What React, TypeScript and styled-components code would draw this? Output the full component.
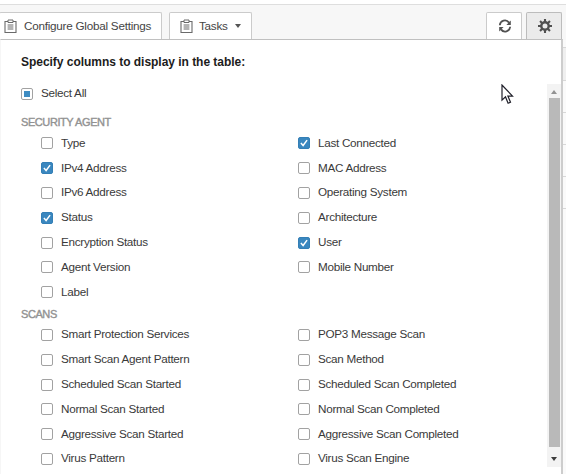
import React from "react";
import styled, { createGlobalStyle } from "styled-components";

const GlobalStyle = createGlobalStyle`
  * { box-sizing: border-box; }
  html, body { margin: 0; padding: 0; overflow: hidden; background: #fff; }
  body { font-family: "Liberation Sans", Arial, sans-serif; font-size: 11.7px; color: #3a3a3a; }
`;

const Screen = styled.main`
  position: relative;
  width: 566px;
  height: 474px;
  overflow: hidden;
  display: flex;
  flex-direction: column;
`;

const Toolbar = styled.header`
  flex: none;
  height: 36px;
  margin-top: 4px;
  padding-right: 4px;
  display: flex;
  align-items: flex-end;
  background: #f7f7f7;
  border-top: 1px solid #dedede;
`;

const Spacer = styled.div`
  flex: 1;
`;

const Button = styled.button<{ $width: number; $gap?: number; $pad?: number; $active?: boolean }>`
  flex: none;
  display: flex;
  align-items: center;
  justify-content: ${(p) => (p.$pad === undefined ? "center" : "flex-start")};
  width: ${(p) => p.$width}px;
  height: 28px;
  margin: 0 0 0 ${(p) => p.$gap ?? 0}px;
  padding: 0 0 0 ${(p) => p.$pad ?? 1}px;
  background: ${(p) => (p.$active ? "#ebebeb" : "#fff")};
  border: 1px solid ${(p) => (p.$active ? "#bcbcbc" : "#cbcbcb")};
  border-bottom-color: #b9b9b9;
  border-radius: 2px 2px 0 0;
  color: #454545;
  font: inherit;
`;

const ButtonText = styled.span<{ $gap?: number }>`
  margin: 0 0 2px ${(p) => p.$gap ?? 7}px;
  letter-spacing: -0.24px;
  white-space: nowrap;
`;

const Caret = styled.i`
  margin: 0 0 0 7px;
  border: 3px solid transparent;
  border-top: 4px solid #555;
  border-bottom: 0;
`;

const Body = styled.div`
  flex: 1;
  min-height: 0;
  display: flex;
`;

const Panel = styled.section`
  width: 563px;
  display: flex;
  flex-direction: column;
  border-top: 1px solid #c0c0c0;
  border-right: 2px solid #cdcdcd;
  border-left: 1px solid #f6f6f6;
  margin-top: -1px;
  background: #fff;
`;

const Title = styled.h1`
  margin: 0;
  padding: 14px 0 0 20px;
  height: 44px;
  font-size: 12px;
  line-height: 16px;
  font-weight: bold;
  color: #1c1c1c;
  letter-spacing: -0.03px;
`;

const Columns = styled.div`
  flex: 1;
  min-height: 0;
  display: flex;
`;

const List = styled.div`
  width: 546px;
  height: 390px;
  overflow: hidden;
`;

const SectionTitle = styled.h2<{ $height: number; $pad: number }>`
  margin: 0;
  height: ${(p) => p.$height}px;
  padding: ${(p) => p.$pad}px 0 0 20px;
  font-size: 11px;
  line-height: 14px;
  font-weight: normal;
  color: #929292;
  letter-spacing: -0.42px;
  -webkit-text-stroke: 0.4px #929292;
`;

const Options = styled.div`
  display: grid;
  grid-template-columns: 257px 257px;
  grid-auto-rows: 24.8px;
  padding-left: 40px;
`;

const Option = styled.label<{ $all?: boolean }>`
  display: flex;
  align-items: center;
  gap: 8px;
  white-space: nowrap;
  ${(p) => p.$all && "height: 19px; padding-left: 20px;"}
`;

const OptionText = styled.span`
  margin-bottom: 2px;
  letter-spacing: -0.28px;
`;

const Box = styled.span<{ $state: "on" | "off" | "mixed" }>`
  flex: none;
  width: 12px;
  height: 12px;
  display: flex;
  align-items: center;
  justify-content: center;
  border: 1px solid ${(p) => (p.$state === "on" ? "#347fb6" : "#a2a2a2")};
  border-radius: 2px;
  background: ${(p) => (p.$state === "on" ? "#3a87bf" : "#fff")};
`;

const MixedMark = styled.i`
  width: 6px;
  height: 6px;
  background: #3f8cc2;
`;

const Scrollbar = styled.div`
  flex: none;
  width: 14px;
  height: 383px;
  display: flex;
  flex-direction: column;
  align-items: center;
  background: #f3f3f3;
`;

const ArrowCell = styled.div<{ $height: number }>`
  height: ${(p) => p.$height}px;
  display: flex;
  align-items: center;
`;

const Arrow = styled.i<{ $up?: boolean }>`
  margin-top: ${(p) => (p.$up ? 1 : 4)}px;
  border: 3px solid transparent;
  ${(p) =>
    p.$up
      ? "border-top: 0; border-bottom: 4px solid #929292;"
      : "border-bottom: 0; border-top: 4px solid #3c3c3c;"}
`;

const Thumb = styled.div`
  flex: 1;
  width: 11px;
  background: #b9b9b9;
`;

const Backdrop = styled.aside`
  flex: 1;
  padding-top: 7px;
  background: #fafafa;
`;

const BackRow = styled.div<{ $head?: boolean }>`
  height: ${(p) => (p.$head ? 34 : 32)}px;
  border-bottom: 1px solid #d8d8d8;
  ${(p) => p.$head && "border-top: 1px solid #d8d8d8; background: #efefef;"}
`;

const Cursor = styled.svg`
  position: absolute;
  left: 501px;
  top: 84px;
`;

const Clipboard = () => (
  <svg width="13" height="15" viewBox="0 0 13 15" fill="none" stroke="#6a6a6a">
    <path d="M4 2.5H1v11h11v-11H9" strokeWidth="1.1" />
    <path d="M4 1h5v2.5H4z" />
    <path d="M3.6 6h5.8M3.6 8h5.8M3.6 10h5.8" strokeWidth="1.2" />
  </svg>
);

const Refresh = () => (
  <svg width="14" height="14" viewBox="0 0 14 14" fill="none" stroke="#505050" strokeWidth="1.8">
    <path d="M1.8 6.2A5.1 5.1 0 0 1 11 3.6M12.2 7.8A5.1 5.1 0 0 1 3 10.4" />
    <path d="M12.8 1.4v4.5H8.4zM1.2 12.6V8.1h4.4z" fill="#505050" stroke="none" />
  </svg>
);

const Gear = () => (
  <svg width="14" height="14" viewBox="0 0 14 14" fill="none" stroke="#505050">
    <circle cx="7" cy="7" r="3.7" strokeWidth="2.4" />
    <path
      d="M7 0v3M7 11v3M0 7h3M11 7h3M2.05 2.05l2.1 2.1M9.85 9.85l2.1 2.1M11.95 2.05l-2.1 2.1M4.15 9.85l-2.1 2.1"
      strokeWidth="2.1"
    />
  </svg>
);

const Check = () => (
  <svg width="10" height="10" viewBox="0 0 10 10" fill="none" stroke="#fff" strokeWidth="1.5">
    <path d="M1.9 5.1l2.2 2.4 4-5.4" />
  </svg>
);

type Item = [label: string, checked?: boolean];

const securityAgent: Item[] = [
  ["Type"], ["Last Connected", true],
  ["IPv4 Address", true], ["MAC Address"],
  ["IPv6 Address"], ["Operating System"],
  ["Status", true], ["Architecture"],
  ["Encryption Status"], ["User", true],
  ["Agent Version"], ["Mobile Number"],
  ["Label"],
];

const scans: Item[] = [
  ["Smart Protection Services"], ["POP3 Message Scan"],
  ["Smart Scan Agent Pattern"], ["Scan Method"],
  ["Scheduled Scan Started"], ["Scheduled Scan Completed"],
  ["Normal Scan Started"], ["Normal Scan Completed"],
  ["Aggressive Scan Started"], ["Aggressive Scan Completed"],
  ["Virus Pattern"], ["Virus Scan Engine"],
];

const OptionList = ({ items }: { items: Item[] }) => (
  <Options>
    {items.map(([label, checked]) => (
      <Option key={label}>
        <Box $state={checked ? "on" : "off"}>{checked && <Check />}</Box>
        <OptionText>{label}</OptionText>
      </Option>
    ))}
  </Options>
);

export default function App() {
  return (
    <>
      <GlobalStyle />
      <Screen>
        <Toolbar>
          <Button $width={163} $gap={-1} $pad={4}>
            <Clipboard />
            <ButtonText>Configure Global Settings</ButtonText>
          </Button>
          <Button $width={83} $gap={7} $pad={10}>
            <Clipboard />
            <ButtonText $gap={6}>Tasks</ButtonText>
            <Caret />
          </Button>
          <Spacer />
          <Button $width={36} aria-label="Refresh">
            <Refresh />
          </Button>
          <Button $width={36} $gap={4} $active aria-label="Columns">
            <Gear />
          </Button>
        </Toolbar>
        <Body>
          <Panel>
            <Title>Specify columns to display in the table:</Title>
            <Columns>
              <List>
                <Option $all>
                  <Box $state="mixed">
                    <MixedMark />
                  </Box>
                  <OptionText>Select All</OptionText>
                </Option>
                <SectionTitle $height={28} $pad={12}>SECURITY AGENT</SectionTitle>
                <OptionList items={securityAgent} />
                <SectionTitle $height={18} $pad={2}>SCANS</SectionTitle>
                <OptionList items={scans} />
              </List>
              <Scrollbar>
                <ArrowCell $height={14}>
                  <Arrow $up />
                </ArrowCell>
                <Thumb />
                <ArrowCell $height={20}>
                  <Arrow />
                </ArrowCell>
              </Scrollbar>
            </Columns>
          </Panel>
          <Backdrop>
            <BackRow $head />
            <BackRow />
            <BackRow />
            <BackRow />
            <BackRow />
          </Backdrop>
        </Body>
        <Cursor width="13" height="21" viewBox="0 0 13 21">
          <path
            d="M1 1v15.2l3.5-3.3 2.6 6.3 2.4-1-2.6-6.1h4.6z"
            fill="#fff"
            stroke="#20202a"
            strokeWidth="1.2"
          />
        </Cursor>
      </Screen>
    </>
  );
}
